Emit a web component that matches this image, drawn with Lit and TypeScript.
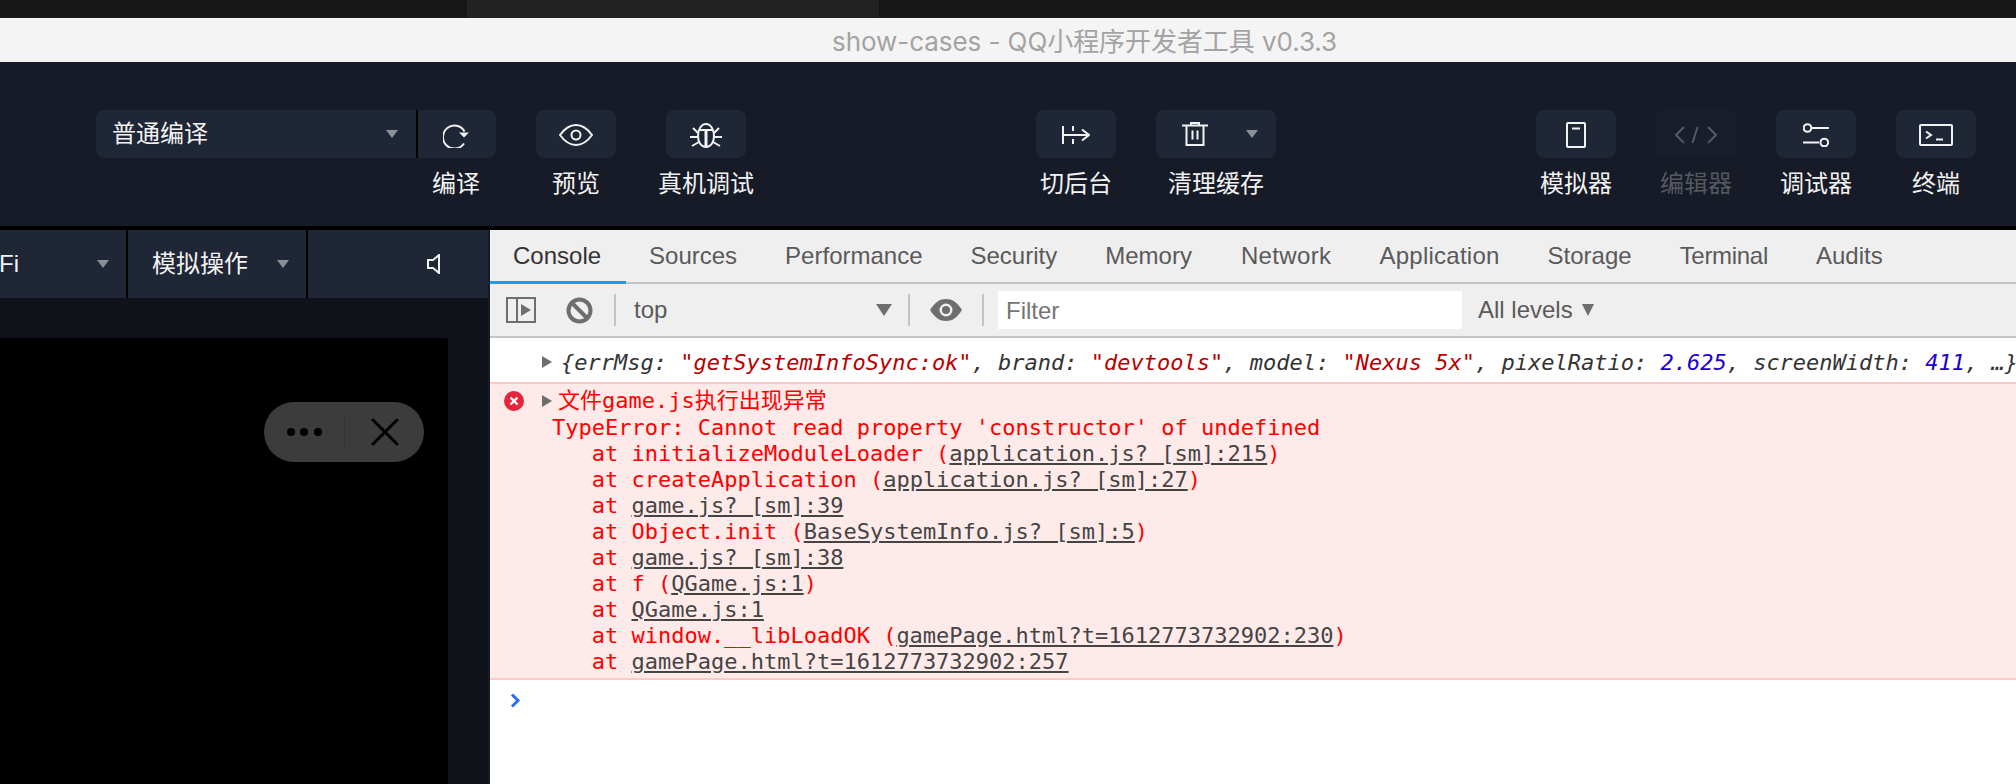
import { LitElement, html, css, svg, unsafeCSS } from "lit";
import { customElement } from "lit/decorators.js";

const UI = unsafeCSS(`"Liberation Sans", "Noto Sans CJK SC", sans-serif`);
const MONO = unsafeCSS(`"DejaVu Sans Mono", "Noto Sans CJK SC", monospace`);

const icon = (w: number, h: number, body: unknown) => html`<svg class="ic" width=${w} height=${h} viewBox="0 0 ${w} ${h}" fill="none" stroke="currentColor" stroke-width="2">${body}</svg>`;

const icons = {
  refresh: icon(28, 26, svg`<path d="M21 21.5A11.5 11.5 0 1 1 21.5 9.5"/><path d="M16 10.5h10l-5 5z" fill="currentColor" stroke="none"/>`),
  eye: icon(34, 26, svg`<path d="M1 13C6 6 11 3 17 3s11 3 16 10c-5 7-10 10-16 10S6 20 1 13z"/><circle cx="17" cy="13" r="4.5"/>`),
  bug: icon(34, 26, svg`<path d="M17 2c-5 0-8 6-8 12s3 11 8 11 8-5 8-11-3-12-8-12z"/><path d="M17 8v17" stroke-width="3"/><path d="M11 8h12M9 11 4 6M25 11l5-5M9 15H1M25 15h8M10 20l-7 4M24 20l7 4"/>`),
  back: icon(28, 18, svg`<path d="M1 0v18M1 9h26M11 0v5M11 13v5M20 3.5 27 9l-7 5.5"/>`),
  trash: icon(26, 24, svg`<path d="M0 3.5h26M9 3V1h8v2M4.5 4v19h17V4M10.5 8.5v9M15.5 8.5v9"/>`),
  phone: icon(20, 26, svg`<rect x="1" y="1" width="18" height="24" rx="1"/><path d="M6 6.5h8"/>`),
  code: icon(42, 18, svg`<path d="M9 1 1 9l8 8M33 1l8 8-8 8M22.5 1l-5 16"/>`),
  sliders: icon(26, 24, svg`<circle cx="4.5" cy="5" r="3.8"/><path d="M9 5h17M0 19.5h16"/><circle cx="21.3" cy="19.5" r="3.8"/>`),
  term: icon(34, 22, svg`<rect x="1" y="1" width="32" height="20" rx="1"/><path d="M7 7.5l5 3.5-5 3.5M17 15.5h7"/>`),
  speaker: icon(13, 20, svg`<path d="M12 1 6 6H1v8h5l6 5z"/>`),
  sidebar: icon(30, 26, svg`<rect x="1" y="1" width="28" height="24"/><path d="M11 1v24"/><path d="M15 7l10 6-10 6z" fill="currentColor" stroke="none"/>`),
  block: icon(27, 27, svg`<circle cx="13.5" cy="13.5" r="11" stroke-width="4"/><path d="M6 6l15 15" stroke-width="4"/>`),
  deye: icon(32, 22, svg`<path d="M0 11C5 3 10 0 16 0s11 3 16 11c-5 8-10 11-16 11S5 19 0 11z" fill="currentColor" stroke="none"/><circle cx="16" cy="11" r="6.5" fill="#efefef" stroke="none"/><circle cx="16" cy="11" r="4" fill="currentColor" stroke="none"/>`),
  err: icon(20, 20, svg`<circle cx="10" cy="10" r="10" fill="#e3263c" stroke="none"/><path d="M6.5 6.5l7 7M13.5 6.5l-7 7" stroke="#fff" stroke-width="2.4"/>`),
};

const TABS: [string, string][] = [
  ["Console", "on"], ["Sources", "pull"], ["Performance", ""], ["Security", ""], ["Memory", ""],
  ["Network", "wide"], ["Application", "wide2"], ["Storage", ""], ["Terminal", "narrow"], ["Audits", ""],
];

@customElement("app-root")
class AppRoot extends LitElement {
  static styles = css`
    :host { display: block; width: 2016px; height: 784px; overflow: hidden; background: #fff; font-family: ${UI}; }
    * { box-sizing: border-box; }
    .ic { display: block; }
    .strip { height: 18px; display: flex; background: #171717; }
    .strip .a { width: 467px; }
    .strip .b { width: 412px; background: #222; }
    .title { height: 44px; background: #f4f4f4; color: #a3a3a3; font: 26px Inter, "Noto Sans CJK SC", sans-serif; line-height: 47px; padding-left: 832px; white-space: nowrap; letter-spacing: -0.06px; overflow: hidden; }
    .toolbar { height: 168px; background: #161b27; border-bottom: 4px solid; border-image: linear-gradient(#2b2f3c 50%, #000 50%) 1; display: flex; padding: 48px 40px 0 96px; color: #f2f2f2; }
    .tool { display: flex; flex-direction: column; align-items: center; width: 80px; }
    .btn { width: 100%; height: 48px; background: #1f2636; border-radius: 8px; display: flex; align-items: center; justify-content: center; padding-top: 1px; }
    .label { font-size: 24px; line-height: 36px; margin-top: 8px; white-space: nowrap; }
    .dim .btn { background: #191e2c; color: #55585f; }
    .dim .label { color: #55585f; }
    .select { width: 322px; height: 48px; background: #1f2636; border-radius: 8px 0 0 8px; border-right: 2px solid #000; display: flex; align-items: center; justify-content: space-between; padding: 0 18px 0 16px; font-size: 24px; }
    .select span { padding-bottom: 5px; }
    .compile { width: 78px; margin-right: 40px; }
    .compile .btn { border-radius: 0 8px 8px 0; }
    .compile .label { padding-right: 2px; }
    .preview { margin-right: 50px; }
    .debug { margin-right: 290px; }
    .back { margin-right: 40px; }
    .clear { width: 120px; margin-right: 260px; }
    .clear .btn { justify-content: space-between; padding: 0 18px 0 26px; }
    .rt { margin-right: 40px; }
    .rt:last-child { margin-right: 0; }
    .caret { width: 0; height: 0; border-left: 6px solid transparent; border-right: 6px solid transparent; border-top: 8px solid #8c8f96; }
    .main { display: flex; height: 554px; }
    .left { width: 490px; flex: none; background: #0f1219; border-right: 2px solid #161b27; display: flex; flex-direction: column; position: relative; }
    .sim { height: 68px; display: flex; color: #f2f2f2; font-size: 24px; flex: none; }
    .seg { background: #1f2636; display: flex; align-items: center; border-right: 2px solid #000; }
    .seg1 { width: 128px; justify-content: space-between; padding-right: 17px; overflow: hidden; }
    .seg1 span { margin-left: -29px; }
    .seg2 { width: 180px; justify-content: space-between; padding: 0 17px 0 24px; }
    .seg2 span { padding-bottom: 5px; }
    .seg3 { width: 180px; border-right: 0; justify-content: flex-end; padding-right: 48px; }
    .game { margin-top: 40px; width: 448px; flex: 1; background: #000; }
    .capsule { position: absolute; left: 264px; top: 172px; width: 160px; height: 60px; border-radius: 30px; background: #3c3c3c; display: flex; align-items: center; }
    .capsule .dots { width: 81px; height: 36px; border-right: 1px solid #333; display: flex; align-items: center; justify-content: center; gap: 5.5px; }
    .capsule .dots i { width: 8px; height: 8px; border-radius: 50%; background: #000; }
    .capsule .x { flex: 1; display: flex; justify-content: center; color: #000; }
    .dev { flex: 1; background: #fff; display: flex; flex-direction: column; min-width: 0; overflow: hidden; }
    .tabs { height: 54px; flex: none; background: #efefef; border-bottom: 2px solid #c4c4c4; display: flex; font-size: 24px; color: #5a5a5a; }
    .tab { padding: 0 24px; line-height: 52px; height: 54px; white-space: nowrap; }
    .tab.on { color: #333; border-bottom: 3px solid #1a9bf0; padding: 0 25px 0 23px; }
    .tab.pull { margin-left: -1px; }
    .tab.wide { letter-spacing: 0.36px; margin-left: 1px; }
    .tab.wide2 { letter-spacing: 0.25px; }
    .tab.narrow { letter-spacing: -0.3px; }
    .ctl { height: 54px; flex: none; background: #efefef; border-bottom: 2px solid #c4c4c4; display: flex; align-items: center; color: #6e6e6e; font-size: 24px; padding-left: 16px; }
    .sep { width: 2px; height: 32px; background: #c4c4c4; flex: none; }
    .g30 { width: 30px; } .g21 { width: 21px; } .g20 { width: 20px; }
    .top { width: 292px; display: flex; justify-content: space-between; align-items: center; padding: 0 16px 0 18px; color: #5a5a5a; }
    .caret2 { width: 0; height: 0; border-left: 8px solid transparent; border-right: 8px solid transparent; border-top: 12px solid #6e6e6e; }
    .filter { width: 464px; height: 38px; background: #fff; color: #757575; padding-left: 8px; line-height: 40px; margin: 0 16px 0 14px; }
    .levels { color: #5a5a5a; display: flex; align-items: center; gap: 9px; }
    .levels .caret2 { border-left-width: 6.5px; border-right-width: 6.5px; }
    .log { font: 22px/26px ${MONO}; }
    .row1 { height: 46px; border-bottom: 2px solid #ffc9c9; padding: 12px 0 0 52px; display: flex; font-style: italic; color: #333; white-space: pre; }
    .tri { width: 0; height: 0; border-top: 6.5px solid transparent; border-bottom: 6.5px solid transparent; border-left: 10.5px solid #6e6e6e; flex: none; }
    .row1 .tri { margin: 6px 9px 0 0; }
    .s { color: #b80000; }
    .n { color: #1c00cf; }
    .errbox { background: #ffeaea; height: 296px; border-bottom: 2px solid #ffc9c9; padding: 4px 0 0 14px; color: #f00; }
    .errhead { display: flex; align-items: center; height: 26px; white-space: pre; }
    .errhead .tri { margin: 0 6px 0 18px; }
    .errbody { padding-left: 48px; margin-top: 1px; }
    .errbody div { height: 26px; white-space: pre; }
    .lnk { color: #444; text-decoration: underline; }
    .prompt { padding: 13px 0 0 20px; color: #2a6ef0; }
  `;

  render() {
    const L = (t: string) => html`<span class="lnk">${t}</span>`;
    return html`
      <div class="strip"><div class="a"></div><div class="b"></div></div>
      <div class="title">show-cases - QQ小程序开发者工具 v0.3.3</div>
      <div class="toolbar">
        <div class="select"><span>普通编译</span><i class="caret"></i></div>
        <div class="tool compile"><div class="btn">${icons.refresh}</div><div class="label">编译</div></div>
        <div class="tool preview"><div class="btn">${icons.eye}</div><div class="label">预览</div></div>
        <div class="tool debug"><div class="btn">${icons.bug}</div><div class="label">真机调试</div></div>
        <div class="tool back"><div class="btn">${icons.back}</div><div class="label">切后台</div></div>
        <div class="tool clear"><div class="btn">${icons.trash}<i class="caret"></i></div><div class="label">清理缓存</div></div>
        <div class="tool rt"><div class="btn">${icons.phone}</div><div class="label">模拟器</div></div>
        <div class="tool rt dim"><div class="btn">${icons.code}</div><div class="label">编辑器</div></div>
        <div class="tool rt"><div class="btn">${icons.sliders}</div><div class="label">调试器</div></div>
        <div class="tool rt"><div class="btn">${icons.term}</div><div class="label">终端</div></div>
      </div>
      <div class="main">
        <div class="left">
          <div class="sim">
            <div class="seg seg1"><span>WiFi</span><i class="caret"></i></div>
            <div class="seg seg2"><span>模拟操作</span><i class="caret"></i></div>
            <div class="seg seg3">${icons.speaker}</div>
          </div>
          <div class="game"></div>
          <div class="capsule">
            <div class="dots"><i></i><i></i><i></i></div>
            <div class="x"><svg class="ic" width="28" height="28" viewBox="0 0 28 28" stroke="currentColor" stroke-width="3" stroke-linecap="round"><path d="M2 2l24 24M26 2 2 26"/></svg></div>
          </div>
        </div>
        <div class="dev">
          <div class="tabs">
            ${TABS.map(([t, c]) => html`<div class="tab ${c}">${t}</div>`)}
          </div>
          <div class="ctl">
            ${icons.sidebar}<span class="g30"></span>${icons.block}<span class="g21"></span>
            <div class="sep"></div>
            <div class="top"><span>top</span><i class="caret2"></i></div>
            <div class="sep"></div><span class="g20"></span>${icons.deye}<span class="g20"></span><div class="sep"></div>
            <div class="filter">Filter</div>
            <div class="levels">All levels<i class="caret2"></i></div>
          </div>
          <div class="log">
            <div class="row1"><i class="tri"></i><span>{errMsg: <span class="s">"getSystemInfoSync:ok"</span>, brand: <span class="s">"devtools"</span>, model: <span class="s">"Nexus 5x"</span>, pixelRatio: <span class="n">2.625</span>, screenWidth: <span class="n">411</span>, …}</span></div>
            <div class="errbox">
              <div class="errhead">${icons.err}<i class="tri"></i><span>文件game.js执行出现异常</span></div>
              <div class="errbody">
                <div>TypeError: Cannot read property 'constructor' of undefined</div>
                <div>   at initializeModuleLoader (${L("application.js? [sm]:215")})</div>
                <div>   at createApplication (${L("application.js? [sm]:27")})</div>
                <div>   at ${L("game.js? [sm]:39")}</div>
                <div>   at Object.init (${L("BaseSystemInfo.js? [sm]:5")})</div>
                <div>   at ${L("game.js? [sm]:38")}</div>
                <div>   at f (${L("QGame.js:1")})</div>
                <div>   at ${L("QGame.js:1")}</div>
                <div>   at window.__libLoadOK (${L("gamePage.html?t=1612773732902:230")})</div>
                <div>   at ${L("gamePage.html?t=1612773732902:257")}</div>
              </div>
            </div>
            <div class="prompt"><svg class="ic" width="11" height="15" viewBox="0 0 11 15" fill="none" stroke="currentColor" stroke-width="3"><path d="M2 1.5l6 6-6 6"/></svg></div>
          </div>
        </div>
      </div>
    `;
  }
}
